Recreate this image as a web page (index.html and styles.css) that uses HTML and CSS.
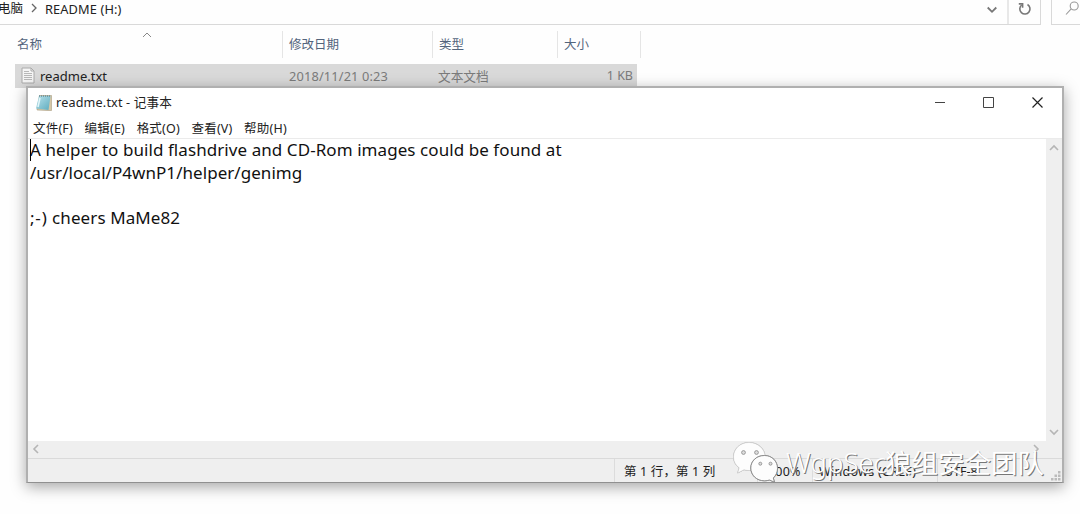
FILE: index.html
```html
<!DOCTYPE html>
<html lang="zh-CN">
<head>
<meta charset="utf-8">
<title>readme.txt - 记事本</title>
<link rel="stylesheet" href="styles.css">
</head>
<body>
<main class="explorer">
  <div class="toolbar">
    <div class="address">
      <span class="crumb crumb-pc">电脑</span>
      <svg class="crumb-arrow" width="8" height="10" viewBox="0 0 8 10"><path d="M2 1l4 4-4 4"/></svg>
      <span class="crumb crumb-drive">README (H:)</span>
      <svg class="drop" width="12" height="8" viewBox="0 0 12 8"><path d="M1.700 1.500L6 5.800l4.300-4.300"/></svg>
      <div class="refresh"><svg width="14" height="14" viewBox="0 0 14 14"><path d="M3.600 3A5.100 5.100 0 1 0 9.500 2.500"/><path d="M.8 1.900h3.800v3.800"/></svg></div>
    </div>
    <div class="search"><svg width="16" height="16" viewBox="0 0 16 16"><circle cx="9.200" cy="6" r="4"/><path d="M6.200 8.900L1 14.500"/></svg></div>
  </div>
  <div class="columns">
    <div class="col col-name">名称<svg class="sort" width="10" height="6" viewBox="0 0 10 6"><path d="M1 5l4-4 4 4"/></svg></div>
    <div class="col col-date">修改日期</div>
    <div class="col col-type">类型</div>
    <div class="col col-size">大小</div>
  </div>
  <div class="row">
    <svg class="file-icon" width="14" height="17" viewBox="0 0 14 17"><path class="sheet" d="M1 1h9l3 3v12H1z"/><path class="fold" d="M10 1v3h3"/><path class="rules" d="M3 4.500h5M3 6.500h8M3 8.500h8M3 10.500h8M3 12.500h8"/></svg>
    <span class="file-name">readme.txt</span>
    <span class="file-date">2018/11/21 0:23</span>
    <span class="file-type">文本文档</span>
    <span class="file-size">1 KB</span>
  </div>
</main>

<section class="window">
  <header class="titlebar">
    <svg class="app-icon" width="18" height="18" viewBox="0 0 18 18"><defs><linearGradient id="pad" x1="0" y1="0" x2="1" y2="1"><stop offset="0" stop-color="#b9e2eb"/><stop offset="1" stop-color="#5dacbf"/></linearGradient></defs><path class="pad-back" d="M4.500 1.500h12v15H13L2 16z"/><path d="M4 2h11.500L13.500 16 1 14.500z" fill="url(#pad)"/><path class="pad-spiral" d="M4 2h12"/><path class="pad-shine" d="M5 4L3 13"/></svg>
    <span class="title">readme.txt - 记事本</span>
    <div class="controls">
      <svg width="12" height="12" viewBox="0 0 12 12"><path d="M1 5.500h10"/></svg>
      <svg width="12" height="12" viewBox="0 0 12 12"><path d="M.5 .5h10v10H.5z"/></svg>
      <svg width="12" height="12" viewBox="0 0 12 12"><path class="close" d="M.5 .5l10 10M10.500 .5l-10 10"/></svg>
    </div>
  </header>
  <nav class="menu"><span>文件(F)</span><span>编辑(E)</span><span>格式(O)</span><span>查看(V)</span><span>帮助(H)</span></nav>
  <div class="editor">
    <div class="text">
      <p class="line-a"><i class="caret"></i>A helper to build flashdrive and CD-Rom images could be found at</p>
      <p class="line-b">/usr/local/P4wnP1/helper/genimg</p>
      <p>&nbsp;</p>
      <p class="line-c"><span class="smile">;-)</span> cheers MaMe82</p>
    </div>
    <div class="vscroll">
      <svg width="10" height="8" viewBox="0 0 10 8"><path d="M1 6l4-4 4 4"/></svg>
      <svg width="10" height="8" viewBox="0 0 10 8"><path d="M1 2l4 4 4-4"/></svg>
    </div>
  </div>
  <div class="hscroll">
    <svg width="8" height="10" viewBox="0 0 8 10"><path d="M6 1L2 5l4 4"/></svg>
    <svg width="8" height="10" viewBox="0 0 8 10"><path d="M2 1l4 4-4 4"/></svg>
  </div>
  <footer class="status">
    <span class="cell cell-pos">第 1 行，第 1 列</span>
    <span class="cell cell-zoom">100%</span>
    <span class="cell cell-eol">Windows (CRLF)</span>
    <span class="cell cell-enc">UTF-8</span>
    <svg class="grip" width="10" height="10" viewBox="0 0 10 10"><path d="M7 0h2.500v2.500H7zM3.500 3.500H6V6H3.500zM7 3.500h2.500V6H7zM0 7h2.500v2.500H0zM3.500 7H6v2.500H3.500zM7 7h2.500v2.500H7z"/></svg>
  </footer>
</section>

<div class="watermark">
  <svg class="wechat" width="48" height="42" viewBox="0 0 48 42">
    <path class="bubble" d="M17 1.500C8 1.500 1.500 8 1.500 16c0 4.500 2.200 8.300 5.700 10.800L5.700 32l6.300-3.300c2 .6 4 .9 6 .8C27 29.200 33 23 33 15.500S26 1.500 17 1.500z"/>
    <path class="bubble front" d="M32.500 14.500c-8 0-13.700 5.500-13.700 12.500s5.700 12.800 13.700 12.800c2 0 3.500-.3 5-.8l5 2.200-1.200-4.200c2.700-2.400 4.200-6 4.200-9.700 0-7-5.500-12.800-13-12.800z"/>
    <g class="eyes"><circle cx="11.500" cy="11.500" r="1.900"/><circle cx="24.500" cy="11.500" r="1.900"/><circle cx="28.300" cy="22.700" r="1.500"/><circle cx="38.500" cy="22.700" r="1.500"/></g>
  </svg>
  <span class="mark-latin">WgpSec</span><span class="mark-cjk">狼组安全团队</span>
</div>
</body>
</html>
```
FILE: styles.css
```css
* { box-sizing: border-box; }
body {
  margin: 0;
  width: 1080px;
  height: 514px;
  overflow: hidden;
  position: relative;
  background: #fefefe;
  font-family: "Noto Sans", "Noto Sans CJK SC", sans-serif;
  font-size: 12.5px;
  color: #222;
}
svg { display: block; fill: none; flex: none; }
span, p { white-space: nowrap; }

.toolbar { display: flex; height: 25px; }
.address {
  display: flex;
  width: 1041px;
  height: 25px;
  border-right: 1px solid #d9d9d9;
  border-bottom: 1px solid #d9d9d9;
  line-height: 18px;
}
.crumb-pc { width: 30px; margin-left: -2px; }
.crumb-arrow { margin: 3px 7px 0 2px; stroke: #666; stroke-width: 1.3; }
.crumb-drive { flex: 1; font-size: 12.8px; letter-spacing: 0.12px; }
.drop { margin: 6px 9px 0 0; stroke: #777; stroke-width: 1.8; }
.refresh {
  width: 33px;
  border-left: 2px solid #e8e8e8;
  padding: 2px 0 0 9px;
  stroke: #777;
  stroke-width: 1.6;
}
.search {
  width: 29px;
  margin-left: 10px;
  padding: 0 0 0 13px;
  border-left: 1px solid #d9d9d9;
  border-bottom: 1px solid #d9d9d9;
  stroke: #999;
  stroke-width: 1.1;
}
.columns {
  display: flex;
  height: 33px;
  padding: 6px 0 0 15px;
  line-height: 27px;
  color: #53647c;
}
.col { border-right: 1px solid #e5e5e5; padding-left: 6px; height: 27px; }
.col-name { display: flex; width: 268px; padding-left: 2px; }
.sort { margin: 1px 0 0 100px; stroke: #888; }
.col-date { width: 150px; }
.col-type { width: 125px; }
.col-size { width: 83px; }
.row {
  display: flex;
  width: 622px;
  height: 24px;
  margin: 6px 0 0 15px;
  padding-left: 6px;
  background: #d9d9d9;
  line-height: 24px;
  color: #7b7b7b;
}
.file-icon { margin: 3px 5px 0 0; }
.sheet { fill: #f5f5f5; stroke: #aaa; }
.fold { stroke: #aaa; }
.rules { stroke: #b8b8b8; }
.file-name { width: 249px; font-size: 13px; color: #222; }
.file-date { width: 149px; font-size: 12.8px; letter-spacing: 0.15px; }
.file-type { width: 125px; font-size: 12.7px; }
.file-size { flex: 1; text-align: right; padding-right: 4px; }

.window {
  position: absolute;
  left: 26px;
  top: 86px;
  width: 1038px;
  height: 397px;
  display: flex;
  flex-direction: column;
  border: 2px solid #b0b0b0;
  border-bottom: 1px solid #909090;
  background: #fff;
  box-shadow: 0 4px 14px rgba(0, 0, 0, 0.35);
}
.titlebar { display: flex; height: 31px; padding-left: 7px; }
.app-icon { margin: 6px 3px 0 0; }
.pad-back { fill: #d6c7a6; stroke: #aa9c80; stroke-width: 0.6; }
.pad-spiral { stroke: #688f98; stroke-width: 1.5; stroke-dasharray: 1 1; }
.pad-shine { stroke: #e4f6f9; stroke-width: 1.5; }
.title { flex: 1; line-height: 30px; font-size: 12.6px; letter-spacing: 0.18px; }
.controls { display: flex; gap: 37px; padding: 9px 18px 0 0; stroke: #444; }
.close { stroke: #222; stroke-width: 1.2; }
.menu {
  display: flex;
  height: 20px;
  gap: 11.6px;
  padding-left: 5px;
  line-height: 20px;
  font-size: 12.5px;
  letter-spacing: 0.2px;
  border-bottom: 1px solid #ebebeb;
}
.editor { display: flex; flex: 1; }
.text { flex: 1; padding-left: 2px; font-size: 17px; color: #111; }
.text p { margin: 0; height: 22.5px; line-height: 21.5px; }
.text .line-a { position: relative; letter-spacing: 0.07px; }
.text .line-b { letter-spacing: 0.05px; }
.text .line-c { letter-spacing: 0.1px; }
.smile { letter-spacing: 0.8px; }
.caret { position: absolute; left: 0; top: 0; width: 1px; height: 22px; background: #000; }
.vscroll {
  display: flex;
  flex-direction: column;
  justify-content: space-between;
  width: 16px;
  padding: 5px 3px;
  background: #efefef;
  stroke: #b5b5b5;
  stroke-width: 1.6;
}
.hscroll {
  display: flex;
  justify-content: space-between;
  height: 17px;
  padding: 3px 22px 0 4px;
  background: #efefef;
  stroke: #b5b5b5;
  stroke-width: 1.6;
}
.status {
  display: flex;
  height: 24px;
  padding-left: 586px;
  border-top: 1px solid #dadada;
  background: #efefef;
  line-height: 25px;
  font-size: 12.5px;
}
.cell { border-left: 1px solid #dcdcdc; }
.cell-pos { width: 143px; padding-left: 9px; letter-spacing: 0.15px; }
.cell-zoom { width: 55px; padding-left: 10px; letter-spacing: 0.2px; }
.cell-eol { width: 125px; padding-left: 6px; letter-spacing: 0.3px; }
.cell-enc { width: 114px; padding-left: 6px; }
.grip { margin-top: 12px; fill: #bbb; }

.watermark {
  position: absolute;
  left: 732px;
  top: 441px;
  display: flex;
  height: 42px;
  line-height: 44px;
  color: #fff;
  text-shadow: 1px 1px 0.5px #777;
}
.wechat { margin-right: 6px; }
.bubble { fill: #fdfdfd; stroke: #d8d8d8; stroke-width: 0.6; filter: drop-shadow(0.4px 0.6px 0.4px #888); }
.front { stroke: #888; stroke-width: 0.9; }
.eyes { fill: #ddd; stroke: #888; stroke-width: 0.8; }
.mark-latin { width: 99px; font-size: 27.5px; font-weight: 300; }
.mark-cjk { font-size: 26.5px; font-weight: 400; }
```
